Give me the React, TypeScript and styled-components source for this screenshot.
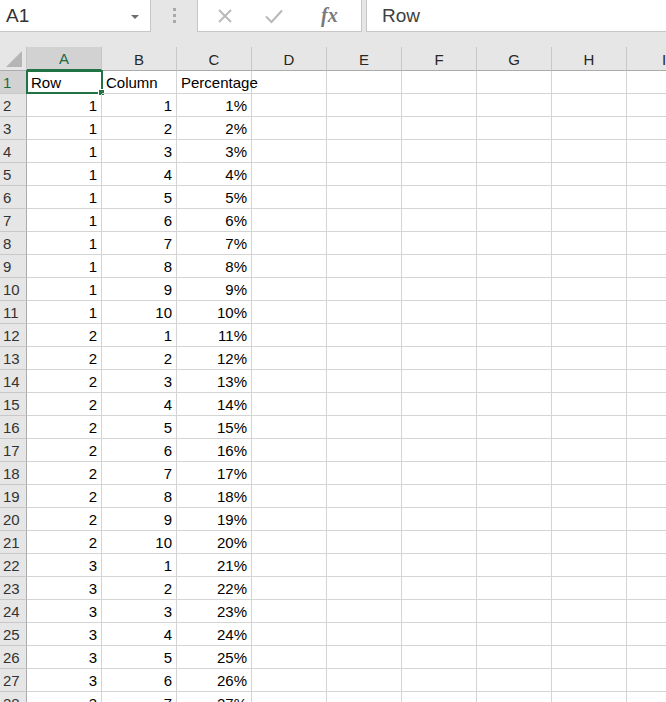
import styled, { createGlobalStyle } from 'styled-components'

const GlobalStyle = createGlobalStyle`
  html, body {
    margin: 0;
    padding: 0;
    background: #ffffff;
    font-family: "Liberation Sans", Arial, sans-serif;
    overflow: hidden;
  }
`

const Page = styled.div`
  width: 666px;
  height: 702px;
  overflow: hidden;
  background: #e6e6e6;
  display: flex;
  flex-direction: column;
`

const FormulaBar = styled.div`
  display: flex;
  height: 33px;
  flex-shrink: 0;
`

const NameBox = styled.div`
  width: 151px;
  height: 32px;
  box-sizing: border-box;
  background: #fff;
  border-right: 1px solid #c6c6c6;
  border-bottom: 1px solid #c6c6c6;
  display: flex;
  align-items: center;
  justify-content: space-between;
  padding: 0 11px 0 6px;
  font-size: 19px;
  color: #333;
`

const Caret = styled.div`
  width: 0;
  height: 0;
  border-left: 4px solid transparent;
  border-right: 4px solid transparent;
  border-top: 4px solid #6e6e6e;
  margin-top: 2px;
`

const Grip = styled.div`
  width: 46px;
  display: flex;
  flex-direction: column;
  align-items: center;
  justify-content: center;
  gap: 3px;
  padding-bottom: 2px;

  span {
    width: 3px;
    height: 3px;
    background: #a8a8a8;
  }
`

const FuncBox = styled.div`
  width: 165px;
  height: 32px;
  box-sizing: border-box;
  background: #fff;
  border-left: 1px solid #c6c6c6;
  border-right: 1px solid #c6c6c6;
  border-bottom: 1px solid #c6c6c6;
  display: flex;
  align-items: center;
  padding-left: 18px;
`

const IconSlot = styled.div<{ $gap: number }>`
  display: flex;
  align-items: center;
  margin-right: ${({ $gap }) => $gap}px;
`

const Fx = styled.span`
  font-family: "Liberation Serif", "Times New Roman", serif;
  font-style: italic;
  font-weight: bold;
  font-size: 20px;
  color: #7a7a7a;
`

const FormulaInput = styled.div`
  flex: 1;
  margin-left: 4px;
  height: 32px;
  box-sizing: border-box;
  background: #fff;
  border-left: 1px solid #c6c6c6;
  border-bottom: 1px solid #c6c6c6;
  display: flex;
  align-items: center;
  padding-left: 15px;
  font-size: 19px;
  color: #404040;
`

const Sheet = styled.div`
  margin-top: 14px;
  display: grid;
  grid-template-columns: 27px repeat(9, 75px);
  grid-template-rows: 24px;
  grid-auto-rows: 23px;
  background: #fff;
  flex: 1;
  overflow: hidden;
  align-content: start;
`

const Corner = styled.div`
  background: #e6e6e6;
  border-right: 1px solid #c6c6c6;
  border-bottom: 1px solid #ababab;
  position: relative;

  &::after {
    content: '';
    position: absolute;
    right: 4px;
    bottom: 3px;
    width: 0;
    height: 0;
    border-left: 16px solid transparent;
    border-bottom: 16px solid #b5b5b5;
  }
`

const ColHeader = styled.div<{ $active?: boolean }>`
  background: ${({ $active }) => ($active ? '#d2d2d2' : '#e6e6e6')};
  border-right: 1px solid ${({ $active }) => ($active ? '#c6c6c6' : '#c8c8c8')};
  border-bottom: ${({ $active }) => ($active ? '2px solid #217346' : '1px solid #ababab')};
  box-sizing: border-box;
  display: flex;
  align-items: center;
  justify-content: center;
  font-size: 15px;
  color: ${({ $active }) => ($active ? '#1e6b40' : '#262626')};
  padding-top: 1px;
`

const RowHeader = styled.div<{ $active?: boolean }>`
  background: ${({ $active }) => ($active ? '#d2d2d2' : '#e6e6e6')};
  border-right: 1px solid #ababab;
  border-bottom: 1px solid #c8c8c8;
  box-sizing: border-box;
  display: flex;
  align-items: center;
  padding-left: 3px;
  font-size: 15px;
  color: ${({ $active }) => ($active ? '#1e6b40' : '#333')};
`

const Cell = styled.div<{ $align?: 'left' | 'right'; $selected?: boolean }>`
  border-right: 1px solid #d4d4d4;
  border-bottom: 1px solid #d4d4d4;
  box-sizing: border-box;
  display: flex;
  align-items: center;
  justify-content: ${({ $align }) => ($align === 'right' ? 'flex-end' : 'flex-start')};
  padding: 1px 4px 0 4px;
  font-size: 15px;
  color: #000;
  white-space: nowrap;
  position: relative;
  overflow: visible;

  ${({ $selected }) =>
    $selected &&
    `
    &::before {
      content: '';
      position: absolute;
      left: -1px;
      top: -1px;
      right: -2px;
      bottom: -1px;
      border: 2px solid #217346;
      pointer-events: none;
    }
    &::after {
      content: '';
      position: absolute;
      right: -4px;
      bottom: -3px;
      width: 7px;
      height: 7px;
      background: #217346;
      border: 1px solid #fff;
      box-sizing: border-box;
    }
  `}
`

const columns = ['A', 'B', 'C', 'D', 'E', 'F', 'G', 'H', 'I']

const XIcon = () => (
  <svg width="18" height="18" viewBox="0 0 18 18">
    <path d="M3 3 L15 15 M15 3 L3 15" stroke="#b8b8b8" strokeWidth="1.8" fill="none" />
  </svg>
)

const CheckIcon = () => (
  <svg width="20" height="18" viewBox="0 0 20 18">
    <path d="M2 9.5 L7.5 15 L18 3.5" stroke="#b8b8b8" strokeWidth="2" fill="none" />
  </svg>
)

const App = () => {
  const rows = Array.from({ length: 28 }, (_, i) => i + 2)

  return (
    <Page>
      <GlobalStyle />
      <FormulaBar>
        <NameBox>
          A1
          <Caret />
        </NameBox>
        <Grip>
          <span />
          <span />
          <span />
        </Grip>
        <FuncBox>
          <IconSlot $gap={30}>
            <XIcon />
          </IconSlot>
          <IconSlot $gap={37}>
            <CheckIcon />
          </IconSlot>
          <Fx>fx</Fx>
        </FuncBox>
        <FormulaInput>Row</FormulaInput>
      </FormulaBar>

      <Sheet>
        <Corner />
        {columns.map((c) => (
          <ColHeader key={c} $active={c === 'A'}>
            {c}
          </ColHeader>
        ))}

        <RowHeader $active>1</RowHeader>
        <Cell $selected>Row</Cell>
        <Cell>Column</Cell>
        <Cell>Percentage</Cell>
        {columns.slice(3).map((c) => (
          <Cell key={c} />
        ))}

        {rows.map((r) => {
          const n = r - 1
          const row = Math.floor((n - 1) / 10) + 1
          const col = ((n - 1) % 10) + 1
          return [
            <RowHeader key={`h${r}`}>{r}</RowHeader>,
            <Cell key={`a${r}`} $align="right">{row}</Cell>,
            <Cell key={`b${r}`} $align="right">{col}</Cell>,
            <Cell key={`c${r}`} $align="right">{n}%</Cell>,
            ...columns.slice(3).map((c) => <Cell key={`${c}${r}`} />),
          ]
        })}
      </Sheet>
    </Page>
  )
}

export default App
